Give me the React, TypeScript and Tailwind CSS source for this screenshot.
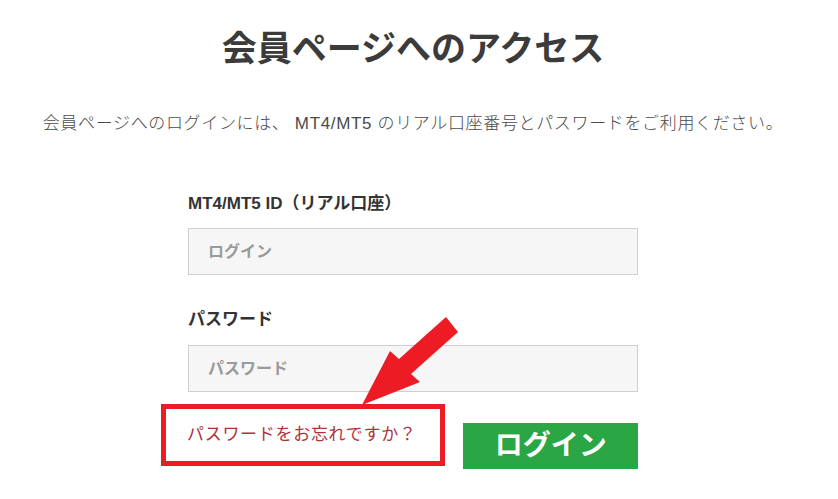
import { useState } from "react";

const font = "font-['Liberation_Sans','Noto_Sans_CJK_JP',sans-serif]";

export default function App() {
  const [login, setLogin] = useState("");
  const [password, setPassword] = useState("");

  return (
    <div className={`relative w-[826px] bg-white pb-8 ${font}`}>
      {/* Heading */}
      <h1 className="pt-[27px] text-center text-[35px] font-bold leading-[44px] text-[#3b3b3b]">
        会員ページへのアクセス
      </h1>
      <p className="mt-[41px] text-center text-[17px] font-light leading-[24px] tracking-[0.65px] text-[#4a4a4a]">
        会員ページへのログインには、 MT4/MT5 のリアル口座番号とパスワードをご利用ください。
      </p>

      {/* Form */}
      <form className="mx-auto mt-[56px] w-[450px]" onSubmit={(e) => e.preventDefault()}>
        <label className="block text-[17px] font-bold leading-[24px] text-[#333]">
          MT4/MT5 ID（リアル口座）
        </label>
        <input
          value={login}
          onChange={(e) => setLogin(e.target.value)}
          placeholder="ログイン"
          className="mt-[12px] block h-[47px] w-full border border-[#cfcfcf] bg-[#f6f6f6] px-[19px] text-[16px] font-bold text-[#333] outline-none placeholder:text-[#9a9a9a]"
        />

        <label className="mt-[33px] block text-[17px] font-bold leading-[24px] text-[#333]">
          パスワード
        </label>
        <input
          type="password"
          value={password}
          onChange={(e) => setPassword(e.target.value)}
          placeholder="パスワード"
          className="mt-[13px] block h-[47px] w-full border border-[#cfcfcf] bg-[#f6f6f6] px-[19px] text-[16px] font-bold text-[#333] outline-none placeholder:text-[#9a9a9a]"
        />

        <div className="mt-[12px] flex items-start">
          <div className="-ml-[27px] flex h-[62px] w-[285px] items-center border-[5px] border-[#ed1c24] pl-[21px]">
            <a href="#" className="text-[17px] leading-[24px] tracking-[0.7px] text-[#b0323a]">
              パスワードをお忘れですか？
            </a>
          </div>
          <button
            type="submit"
            className="ml-[18px] mt-[19px] flex h-[46px] w-[175px] items-center justify-center bg-[#2ba644] text-[28px] font-bold leading-none text-white"
          >
            ログイン
          </button>
        </div>
      </form>

      {/* Annotation arrow */}
      <svg
        className="pointer-events-none absolute left-0 top-0"
        width="838"
        height="499"
        viewBox="0 0 838 499"
      >
        <polygon
          points="446,317 458,332 411,374 420,382 362,405 390,351 399,359"
          fill="#ed1c24"
        />
      </svg>
    </div>
  );
}
